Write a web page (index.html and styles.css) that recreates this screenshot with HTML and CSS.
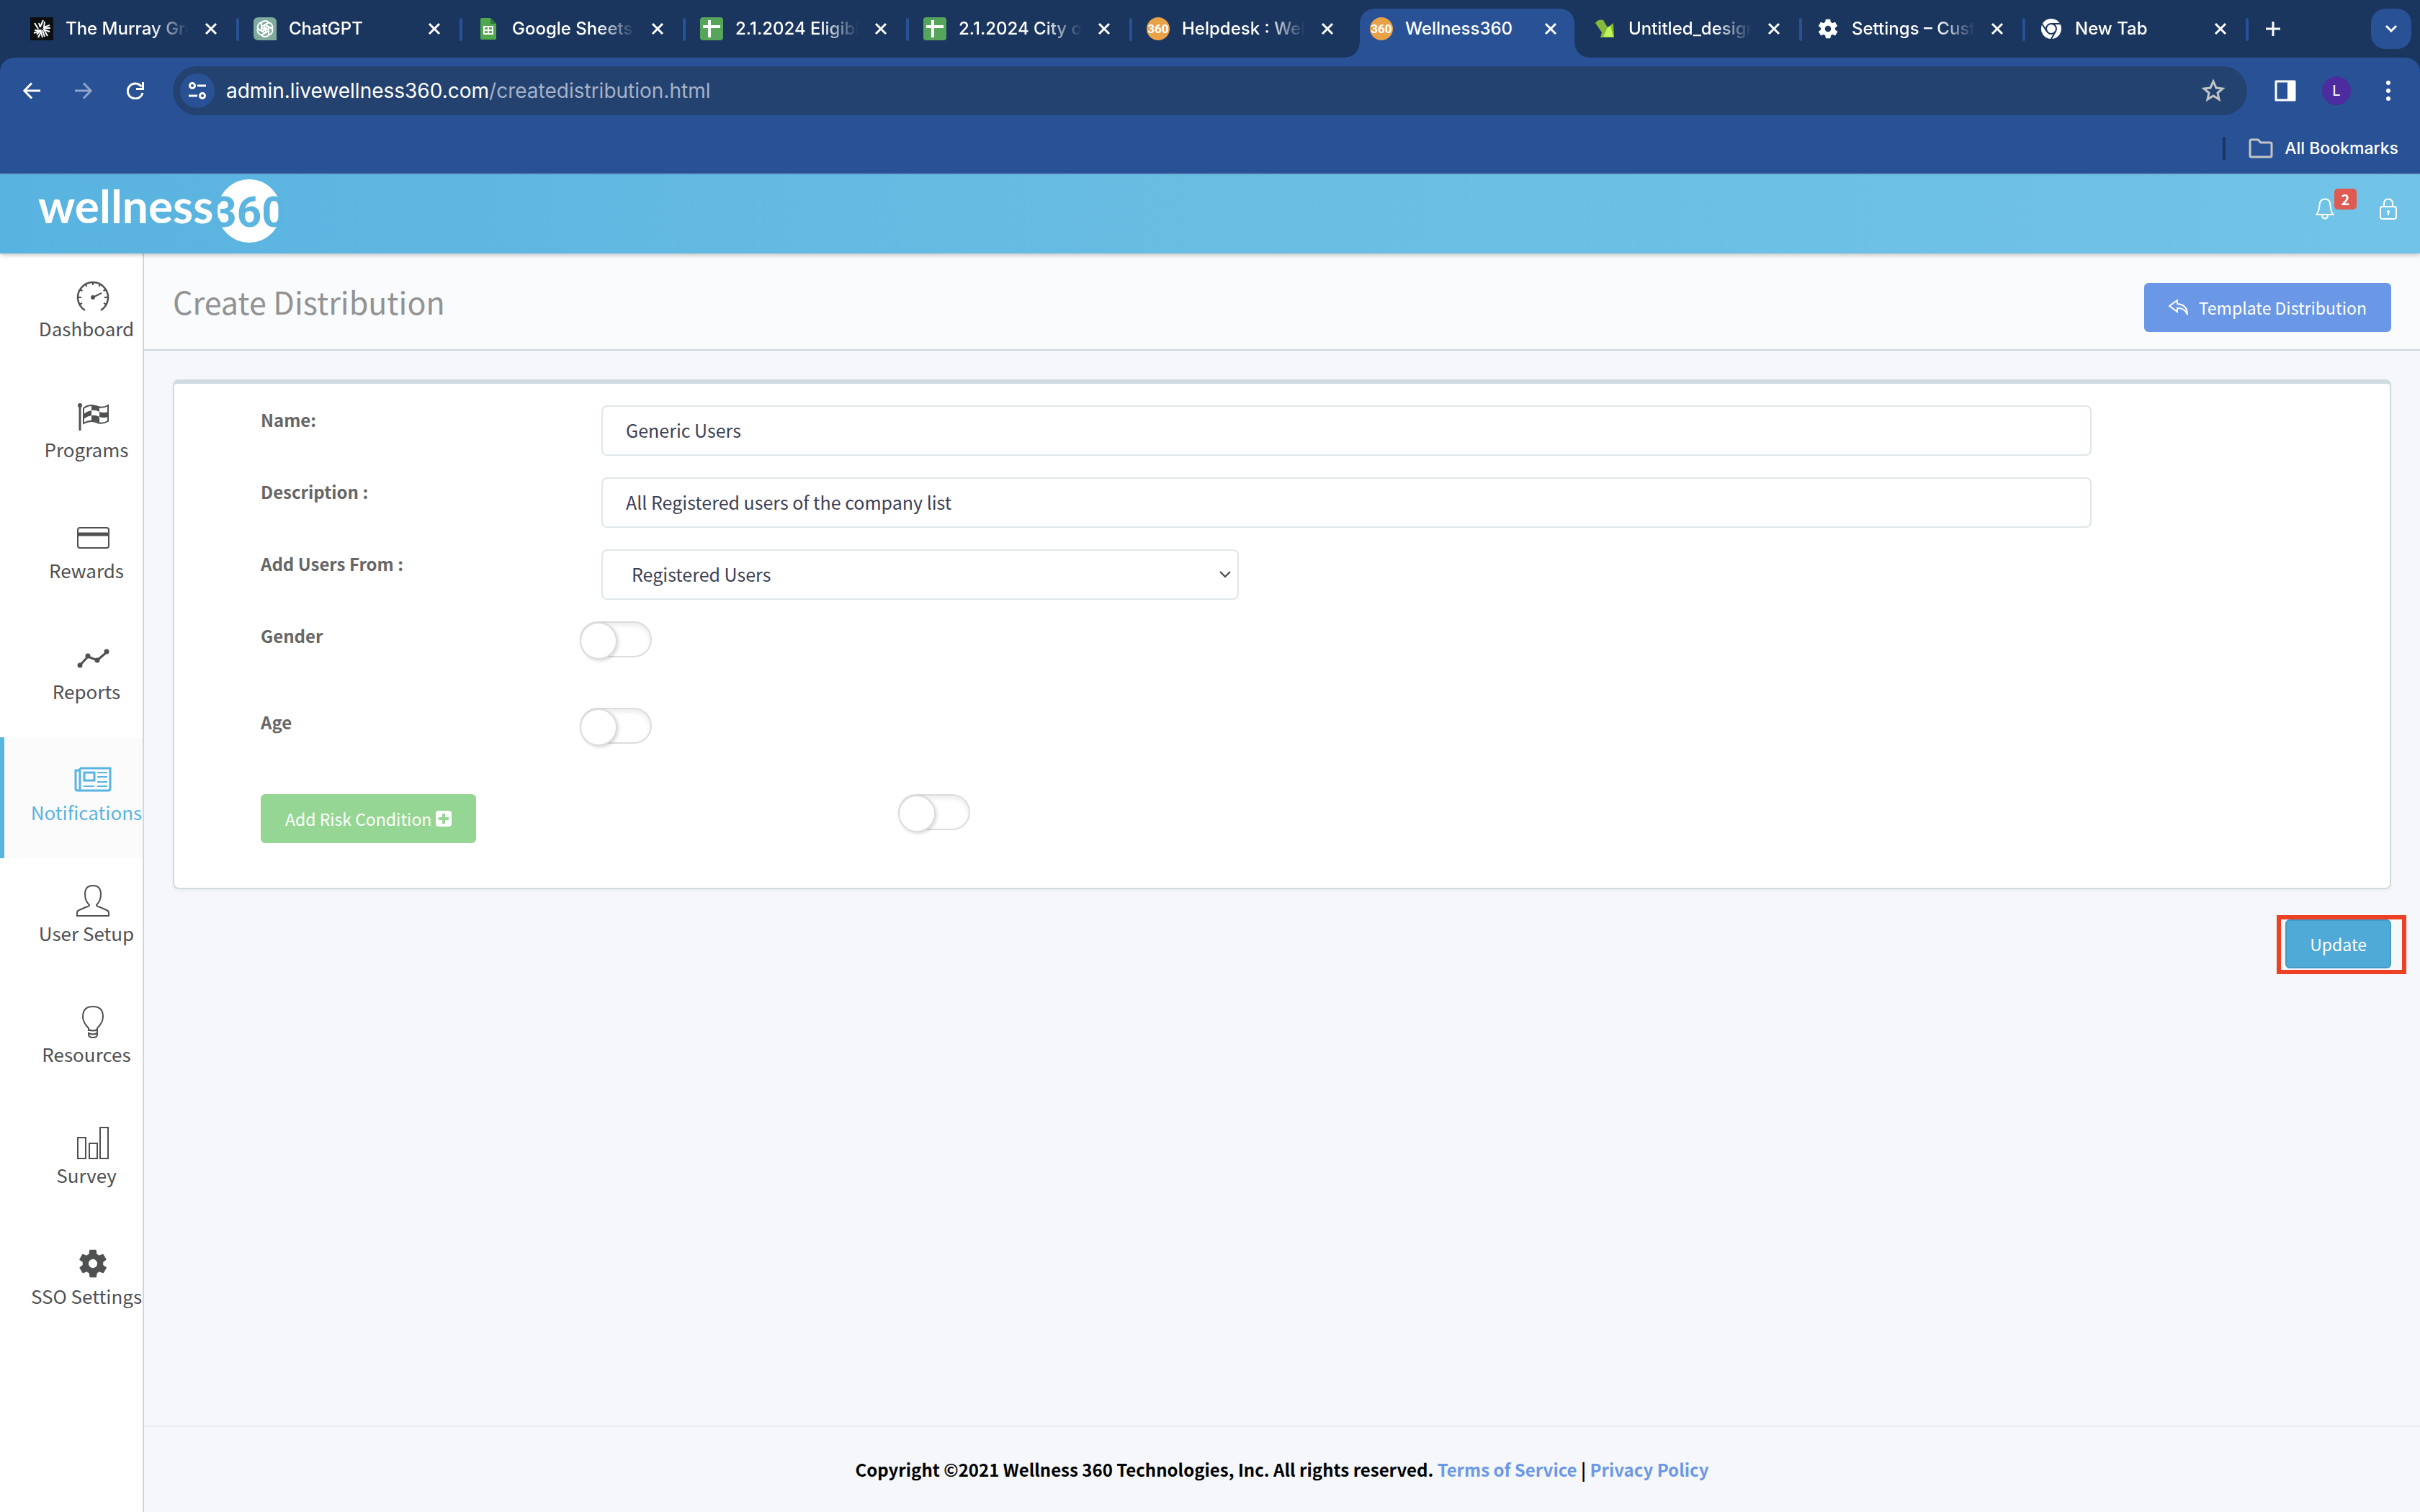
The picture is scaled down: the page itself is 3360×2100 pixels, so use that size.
FILE: index.html
```html
<!DOCTYPE html>
<html lang="en">
<head>
    <meta charset="UTF-8">
    <meta name="viewport" content="width=device-width, initial-scale=1.0">
    <title>Wellness360</title>
    <link rel="stylesheet" href="styles.css">
</head>
<body>
    <!-- shared symbols -->
    <svg width="0" height="0" class="defs">
        <symbol id="close" viewBox="0 0 18 18"><path d="M2 2l14 14M16 2L2 16" stroke="#fff" stroke-width="3" fill="none"/></symbol>
        <symbol id="sheet" viewBox="0 0 32 32"><rect width="32" height="32" rx="4" fill="#57a55a"/><path d="M13 4v24M4 13h24" stroke="#fff" stroke-width="4"/></symbol>
        <symbol id="w360" viewBox="0 0 32 32"><circle cx="16" cy="16" r="16" fill="#eaa248"/><text x="16" y="22" text-anchor="middle" font-family="Roboto, sans-serif" font-weight="bold" font-size="17" fill="#fff">360</text></symbol>
        <symbol id="gear" viewBox="0 0 24 24"><path d="M19.4 13a7.500 7.500 0 0 0 0-2l2.100-1.600a.5.5 0 0 0 .1-.7l-2-3.400a.5.5 0 0 0-.6-.2l-2.500 1a7.300 7.300 0 0 0-1.700-1L14.500 2.400a.5.5 0 0 0-.5-.4h-4a.5.5 0 0 0-.5.400L9.100 5.100a7.700 7.700 0 0 0-1.700 1l-2.500-1a.5.5 0 0 0-.6.200l-2 3.400a.5.5 0 0 0 .1.700L4.600 11a8 8 0 0 0 0 2l-2.100 1.600a.5.5 0 0 0-.1.700l2 3.400c.1.200.4.300.6.200l2.500-1c.5.400 1.100.700 1.700 1l.4 2.700c0 .200.200.4.500.4h4c.2 0 .5-.2.500-.4l.4-2.700c.6-.300 1.200-.600 1.700-1l2.500 1c.2.100.5 0 .6-.2l2-3.400a.5.5 0 0 0-.1-.7zM12 15.200a3.200 3.200 0 1 1 0-6.400 3.200 3.200 0 0 1 0 6.400z" fill="currentColor"/></symbol>
    </svg>

    <div class="browser">
    <div class="tab-strip">
        <div class="tab">
            <svg class="favicon" viewBox="0 0 32 32"><rect width="32" height="32" fill="#0b0f10"/><path d="M18 4l-4 9M12 8l2 6M6 8l5 8M27 11l-8 3 1-8M6 18h8l-5 6M5 22l7-3M28 15h-9M27 20l-8-3 5 9M20 27l-3-9M17 28l-2-8-4 8" stroke="#fff" stroke-width="2" fill="none"/></svg>
            <span class="tab-title">The Murray Group</span>
            <button class="tab-close" aria-label="Close tab"><svg><use href="#close"/></svg></button>
        </div>
        <div class="tab">
            <svg class="favicon" viewBox="0 0 32 32"><path d="M7 0h18q7 0 7 7v25H7q-7 0-7-7V7q0-7 7-7z" fill="#7faa9c"/><g fill="none" stroke="#fff" stroke-width="2"><path id="petal" d="M11 18v-8q0-5 5-5 3 0 5 2l-6 4v6"/><use href="#petal" transform="rotate(60 16 16)"/><use href="#petal" transform="rotate(120 16 16)"/><use href="#petal" transform="rotate(180 16 16)"/><use href="#petal" transform="rotate(240 16 16)"/><use href="#petal" transform="rotate(300 16 16)"/></g></svg>
            <span class="tab-title">ChatGPT</span>
            <button class="tab-close" aria-label="Close tab"><svg><use href="#close"/></svg></button>
        </div>
        <div class="tab">
            <svg class="favicon" viewBox="0 0 32 32"><path d="M7 1h12l8 8v20a2 2 0 0 1-2 2H7a2 2 0 0 1-2-2V3a2 2 0 0 1 2-2z" fill="#50a84f"/><path d="M19 1l8 8h-8z" fill="#2f7a36"/><path d="M10 13h12v10H10zM10 18h12M16 13v10" fill="none" stroke="#fff" stroke-width="2"/></svg>
            <span class="tab-title">Google Sheets: Sign</span>
            <button class="tab-close" aria-label="Close tab"><svg><use href="#close"/></svg></button>
        </div>
        <div class="tab">
            <svg class="favicon"><use href="#sheet"/></svg>
            <span class="tab-title">2.1.2024 Eligibility</span>
            <button class="tab-close" aria-label="Close tab"><svg><use href="#close"/></svg></button>
        </div>
        <div class="tab">
            <svg class="favicon"><use href="#sheet"/></svg>
            <span class="tab-title">2.1.2024 City of</span>
            <button class="tab-close" aria-label="Close tab"><svg><use href="#close"/></svg></button>
        </div>
        <div class="tab no-line">
            <svg class="favicon"><use href="#w360"/></svg>
            <span class="tab-title">Helpdesk : Wellness</span>
            <button class="tab-close" aria-label="Close tab"><svg><use href="#close"/></svg></button>
        </div>
        <div class="tab active">
            <svg class="favicon"><use href="#w360"/></svg>
            <span class="tab-title">Wellness360</span>
            <button class="tab-close" aria-label="Close tab"><svg><use href="#close"/></svg></button>
        </div>
        <div class="tab">
            <svg class="favicon" viewBox="0 0 32 32"><path d="M3 8q4-6 11-4l6 10 8-6 1 20H10l2-7z" fill="#86b839"/><path d="M20 14l4-2 4 15H14z" fill="#c0f457"/></svg>
            <span class="tab-title">Untitled_design</span>
            <button class="tab-close" aria-label="Close tab"><svg><use href="#close"/></svg></button>
        </div>
        <div class="tab">
            <svg class="favicon"><use href="#gear"/></svg>
            <span class="tab-title">Settings – Customize</span>
            <button class="tab-close" aria-label="Close tab"><svg><use href="#close"/></svg></button>
        </div>
        <div class="tab">
            <svg class="favicon" viewBox="0 0 32 32"><circle cx="16" cy="16" r="14" fill="#fff"/><g fill="none" stroke="#1a355e" stroke-width="2"><circle cx="16" cy="16" r="7"/><path d="M16 9h13M10 19.500L3 9M22 19.500L16 30"/></g></svg>
            <span class="tab-title">New Tab</span>
            <button class="tab-close" aria-label="Close tab"><svg><use href="#close"/></svg></button>
        </div>
        <button class="new-tab" aria-label="New tab"><svg width="22" height="22" viewBox="0 0 22 22"><path d="M11 1v20M1 11h20" stroke="#fff" stroke-width="3"/></svg></button>
        <button class="tab-search" aria-label="Search tabs"><svg width="18" height="12" viewBox="0 0 18 12"><path d="M2 2l7 7 7-7" fill="none" stroke="#fff" stroke-width="3"/></svg></button>
    </div>

    <div class="browser-bar">
        <div class="toolbar">
            <button class="nav-button" aria-label="Back"><svg viewBox="0 0 24 24"><path d="M24 12H2M12 1.500L1.800 12 12 22.500" fill="none" stroke="#fff" stroke-width="3"/></svg></button>
            <button class="nav-button" aria-label="Forward"><svg viewBox="0 0 24 24"><path d="M0 12h22M12 1.500L22.200 12 12 22.500" fill="none" stroke="#8fa5cb" stroke-width="3"/></svg></button>
            <button class="nav-button" aria-label="Reload"><svg viewBox="0 0 24 24"><path d="M22 15a10.500 10.500 0 1 1-1.500-8.500M22.500 0v9.500H13" fill="none" stroke="#fff" stroke-width="3"/></svg></button>
            <div class="omnibox">
                <span class="site-info"><svg width="26" height="26" viewBox="0 0 26 26" fill="none" stroke="#fff" stroke-width="3"><circle cx="6" cy="6" r="3.500"/><path d="M13 6h12M1 20h12"/><circle cx="20" cy="20" r="3.500"/></svg></span>
                <span class="url">admin.livewellness360.com<span class="path">/createdistribution.html</span></span>
                <svg class="star" width="34" height="34" viewBox="0 0 34 34"><path d="M17 4l4 9 9 1-7 6 2 9-8-5-8 5 2-9-7-6 9-1z" fill="none" stroke="#c3c4c6" stroke-width="3"/></svg>
            </div>
            <svg class="side-panel" width="30" height="30" viewBox="0 0 30 30"><path d="M2 2h26v26H2z" fill="none" stroke="#fff" stroke-width="3" stroke-linejoin="round"/><path d="M18 2h10v26H18z" fill="#fff"/></svg>
            <span class="avatar">L</span>
            <svg class="more" width="8" height="30" viewBox="0 0 8 30" fill="#fff"><circle cx="4" cy="4" r="3"/><circle cx="4" cy="15" r="3"/><circle cx="4" cy="26" r="3"/></svg>
        </div>
        <div class="bookmarks">
            <a href="#" class="all-bookmarks">
                <svg width="34" height="28" viewBox="0 0 34 28"><path d="M2 24V4q0-2 2-2h9l4 4h13q2 0 2 2v16q0 2-2 2H4q-2 0-2-2z" fill="none" stroke="#c3c4c6" stroke-width="3"/></svg>
                All Bookmarks
            </a>
        </div>
    </div>
    </div>

    <header class="header">
        <a href="#" class="logo" aria-label="wellness360">
            <svg width="340" height="96" viewBox="0 0 340 96">
                <circle cx="294" cy="49" r="44" fill="#fff"/>
                <text x="1" y="66" class="logo-word">wellness</text>
                <text x="294" y="71" class="logo-num">360</text>
            </svg>
        </a>
        <div class="header-tools">
            <a href="#" class="bell" aria-label="Notifications">
                <svg width="26" height="30" viewBox="0 0 26 30" fill="none" stroke="#fff" stroke-width="2"><path d="M13 1.500q7 0 7.500 8 .3 8 4 13.500H1.500Q5.200 17.500 5.500 9.500q.5-8 7.500-8zM9 23.500q0 5 4 5t4-5"/></svg>
                <span class="badge">2</span>
            </a>
            <a href="#" class="lock" aria-label="Lock">
                <svg width="26" height="30" viewBox="0 0 26 30" fill="none" stroke="#fff" stroke-width="2"><rect x="2" y="12" width="22" height="17" rx="3"/><path d="M7 12V8q0-6.500 6-6.500T19 8v4M13 19v5"/><circle cx="13" cy="19" r="1"/></svg>
            </a>
        </div>
    </header>

    <div class="page">
        <nav class="sidebar">
            <a href="#" class="nav-item">
                <svg viewBox="0 0 46 46" fill="none" stroke="#4f5051" stroke-width="2"><path d="M12 43A21 21 0 1 1 34 43" stroke-width="2.500"/><path d="M23 3v5M12.500 6l2 4M33.500 6l-2 4M4.500 14l4 2M41.500 14l-4 2M2 25h5M44 25h-5M4 35l4-2M42 35l-4-2M23 25l12-6"/><circle cx="23" cy="25" r="2" fill="#4f5051"/></svg>
                <span>Dashboard</span>
            </a>
            <a href="#" class="nav-item">
                <svg viewBox="0 0 46 42" fill="none" stroke="#4f5051" stroke-width="2"><path d="M5 6v34" stroke-width="3"/><circle cx="5" cy="5" r="3" fill="#4f5051" stroke="none"/><path d="M10 9q8-6 17-3 9 4 17-1v22q-9 5-17 1-8-3-17 2z"/><path d="M21 5q6-1 11 3v6q-5-3-11-2zM10 17q5-4 11-5v7q-6 1-11 5zM32 14q6 2 12 0v7q-6 2-12 0zM21 19q6-1 11 2v8q-5-3-11-3z" fill="#4f5051" stroke="none"/></svg>
                <span>Programs</span>
            </a>
            <a href="#" class="nav-item">
                <svg viewBox="0 0 46 42" fill="none" stroke="#4f5051" stroke-width="2"><rect x="2" y="7" width="43" height="28" rx="3"/><path d="M2 16h43" stroke-width="5"/></svg>
                <span>Rewards</span>
            </a>
            <a href="#" class="nav-item">
                <svg viewBox="0 0 46 42" fill="#4f5051"><path d="M5 30l11-12 13 5 13-11" fill="none" stroke="#4f5051" stroke-width="3"/><circle cx="5" cy="30" r="3.500"/><circle cx="16" cy="17" r="3.500"/><circle cx="29" cy="23" r="3.500"/><circle cx="42" cy="11" r="3.500"/></svg>
                <span>Reports</span>
            </a>
            <a href="#" class="nav-item current">
                <svg viewBox="0 0 52 42" fill="none" stroke="#58b4e1" stroke-width="3"><path d="M8 5h42v28q0 3-3 3H5q-3 0-3-3V8h5M8 5v28q0 3-3 3"/><rect x="14" y="11" width="14" height="11"/><path d="M32 11h14M32 17h14M32 24h14M13 30h15M32 30h14" stroke-width="2"/></svg>
                <span>Notifications</span>
            </a>
            <a href="#" class="nav-item">
                <svg viewBox="0 0 46 46" fill="none" stroke="#4f5051" stroke-width="2"><path d="M18 29Q12 23 12 14 12 2 23 2t11 12q0 9-6 15 0 2 5 3l9 4q3 1 3 4v4H1v-4q0-3 3-4l9-4q5-1 5-3z"/></svg>
                <span>User Setup</span>
            </a>
            <a href="#" class="nav-item">
                <svg viewBox="0 0 46 46" fill="none" stroke="#4f5051" stroke-width="2"><path d="M17 36v-4Q9 24 9 16 9 2 23 2t14 14q0 8-8 16v4M17 34q6 3 12 0v7q0 4-6 4t-6-4v-2q6 3 12 0"/></svg>
                <span>Resources</span>
            </a>
            <a href="#" class="nav-item">
                <svg viewBox="0 0 46 46" fill="none" stroke="#4f5051" stroke-width="2"><rect x="2" y="16" width="11" height="29"/><rect x="18" y="24" width="11" height="21"/><rect x="33" y="2" width="11" height="43"/></svg>
                <span>Survey</span>
            </a>
            <a href="#" class="nav-item">
                <svg><use href="#gear"/></svg>
                <span>SSO Settings</span>
            </a>
        </nav>

        <div class="content">
            <div class="page-head">
                <h1>Create Distribution</h1>
                <button class="btn btn-template">
                    <svg width="28" height="22" viewBox="0 0 28 22" fill="none" stroke="#fff" stroke-width="2"><path d="M12 1L1 9l11 8v-5q10-1 14 9 0-14-14-15z"/></svg>
                    Template Distribution
                </button>
            </div>

            <form class="panel">
                <div class="form-row">
                    <label for="name">Name:</label>
                    <input type="text" id="name" value="Generic Users">
                </div>
                <div class="form-row">
                    <label for="description">Description :</label>
                    <input type="text" id="description" value="All Registered users of the company list">
                </div>
                <div class="form-row">
                    <label for="users-from">Add Users From :</label>
                    <select id="users-from">
                        <option>Registered Users</option>
                    </select>
                </div>
                <div class="form-row toggle-row">
                    <label for="gender">Gender</label>
                    <input type="checkbox" class="switch" id="gender">
                </div>
                <div class="form-row toggle-row">
                    <label for="age">Age</label>
                    <input type="checkbox" class="switch" id="age">
                </div>
                <div class="form-row risk-row">
                    <button type="button" class="btn btn-risk">Add Risk Condition
                        <svg width="22" height="24" viewBox="0 0 22 24"><rect y="1" width="22" height="22" rx="4" fill="#fff"/><path d="M11 5v14M4 12h14" stroke="#96d694" stroke-width="4"/></svg>
                    </button>
                    <input type="checkbox" class="switch" aria-label="Risk condition">
                </div>
            </form>

            <div class="actions">
                <div class="highlight">
                    <button class="btn btn-update">Update</button>
                </div>
            </div>

            <footer class="footer">
                <p>Copyright ©2021 Wellness 360 Technologies, Inc. All rights reserved. <a href="#">Terms of Service</a> | <a href="#">Privacy Policy</a></p>
            </footer>
        </div>
    </div>
</body>
</html>
```
FILE: styles.css
```css
* {
    box-sizing: border-box;
}
body {
    margin: 0;
    min-height: 100vh;
    display: flex;
    flex-direction: column;
    font-family: 'Noto Sans CJK SC', 'Noto Sans', sans-serif;
    font-size: 25px;
    line-height: 36px;
    color: #4f5051;
    background-color: #f5f7fb;
}
button, input, select {
    font: inherit;
    margin: 0;
}
button {
    border: none;
    padding: 0;
    background: none;
    cursor: pointer;
}
a {
    text-decoration: none;
}
svg {
    display: block;
    flex: none;
}
.defs {
    position: absolute;
}

/* browser tabs */
.browser {
    background-color: #1a355e;
    font-family: Inter, sans-serif;
    color: #fff;
}
.tab-strip {
    display: flex;
    align-items: flex-start;
    height: 80px;
    padding: 12px 12px 0 20px;
    font-weight: 500;
    font-size: 24px;
}
.tab {
    position: relative;
    display: flex;
    align-items: center;
    flex: 0 1 310px;
    min-width: 0;
    height: 56px;
    padding: 0 28px 0 22px;
}
.tab::after {
    content: "";
    position: absolute;
    right: -2px;
    top: 13px;
    width: 4px;
    height: 32px;
    border-radius: 2px;
    background-color: #285196;
}
.tab.no-line::after {
    display: none;
}
.tab.active {
    height: 68px;
    padding-bottom: 12px;
}
.tab.active > * {
    position: relative;
}
.tab.active::before {
    content: "";
    position: absolute;
    left: 8px;
    right: 4px;
    top: 0;
    bottom: 0;
    border-radius: 20px 20px 0 0;
    background-color: #285196;
}
/* curved feet of the active tab */
.tab.active::after {
    left: -12px;
    right: -16px;
    top: auto;
    bottom: 0;
    width: auto;
    height: 20px;
    border-radius: 0;
    background: radial-gradient(circle at 0 0, transparent 19px, #285196 20px) left / 20px 20px no-repeat,
                radial-gradient(circle at 100% 0, transparent 19px, #285196 20px) right / 20px 20px no-repeat;
}
.favicon {
    width: 32px;
    height: 32px;
}
.tab-title {
    flex: 1;
    min-width: 0;
    margin: 0 22px 0 17px;
    overflow: hidden;
    white-space: nowrap;
    mask-image: linear-gradient(to right, #000 70%, transparent);
}
.tab.active .tab-title {
    mask-image: none;
}
.tab-close svg {
    width: 18px;
    height: 18px;
}
.new-tab {
    margin: 17px 0 0 25px;
}
.tab-search {
    display: flex;
    align-items: center;
    justify-content: center;
    width: 56px;
    height: 56px;
    margin-left: auto;
    border-radius: 20px;
    background-color: #285196;
}

/* address bar */
.browser-bar {
    height: 162px;
    border-bottom: 2px solid #4f78b0;
    border-radius: 20px 20px 0 0;
    background-color: #285196;
}
.toolbar {
    display: flex;
    align-items: center;
    height: 92px;
    padding: 0 40px 0 32px;
}
.nav-button {
    margin-right: 48px;
}
.nav-button svg {
    width: 24px;
    height: 24px;
}
.omnibox {
    display: flex;
    align-items: center;
    flex: 1;
    height: 68px;
    margin-left: -8px;
    padding: 0 30px 0 10px;
    border-radius: 34px;
    background-color: #24426f;
}
.site-info {
    display: flex;
    align-items: center;
    justify-content: center;
    width: 48px;
    height: 48px;
    border-radius: 50%;
    background-color: #285196;
}
.url {
    flex: 1;
    margin-left: 16px;
    font-size: 28px;
}
.path {
    color: #a5b2c9;
}
.side-panel {
    margin-left: 38px;
}
.avatar {
    width: 40px;
    height: 40px;
    margin: 0 48px 0 36px;
    border-radius: 50%;
    background-color: #4c2c9f;
    font-size: 20px;
    line-height: 40px;
    text-align: center;
}
.bookmarks {
    display: flex;
    justify-content: flex-end;
    align-items: center;
    height: 68px;
    padding-right: 30px;
}
.all-bookmarks {
    display: flex;
    align-items: center;
    gap: 16px;
    height: 32px;
    padding-left: 32px;
    border-left: 4px solid #1a355e;
    font-size: 23px;
    font-weight: 500;
    color: #fff;
}

/* site header */
.header {
    position: relative;
    display: flex;
    justify-content: space-between;
    height: 110px;
    padding: 2px 31px 0 52px;
    background: linear-gradient(to right, #59b3e0, #69bde3 50%, #71c3e7);
    box-shadow: 0 2px 6px rgba(0, 0, 0, 0.25);
}
.logo-word {
    font: bold 64px Lato, sans-serif;
    fill: #fff;
}
.logo-num {
    font: bold 60px 'Liberation Sans Narrow', Roboto, sans-serif;
    fill: #5cb5e1;
    text-anchor: middle;
}
.header-tools {
    display: flex;
    gap: 62px;
    padding-top: 31px;
}
.bell {
    position: relative;
}
.badge {
    position: absolute;
    left: 26px;
    top: -13px;
    width: 31px;
    height: 29px;
    border-radius: 5px;
    background-color: #df5b52;
    font-size: 20px;
    font-weight: bold;
    line-height: 29px;
    text-align: center;
    color: #fff;
}

/* layout */
.page {
    display: flex;
    flex: 1;
}
.sidebar {
    flex: none;
    width: 200px;
    border-right: 2px solid #d5d5d5;
    background-color: #fff;
}
.nav-item {
    display: flex;
    flex-direction: column;
    align-items: center;
    height: 168px;
    padding: 36px 0 0 36px;
    border-left: 6px solid transparent;
    font-size: 26px;
    white-space: nowrap;
    color: #4f5051;
}
.nav-item svg {
    width: 46px;
    height: 46px;
    margin-left: 18px;
}
.nav-item span {
    margin-top: 4px;
}
.nav-item.current {
    border-color: #58b4e1;
    background-color: #fbfbfc;
    color: #58b4e1;
}
.nav-item.current svg {
    width: 52px;
}
.content {
    display: flex;
    flex-direction: column;
    flex: 1;
    min-width: 0;
}
.page-head {
    display: flex;
    justify-content: space-between;
    height: 135px;
    padding: 36px 40px 24px;
    border-bottom: 2px solid #d0dae1;
    background-color: #fafbfd;
}
h1 {
    margin: 0;
    font-size: 43px;
    font-weight: normal;
    line-height: 60px;
    color: #929292;
}
.btn {
    display: flex;
    align-items: center;
    justify-content: center;
    height: 68px;
    padding: 0 34px;
    border-radius: 6px;
    font-size: 23px;
    color: #fff;
}
.btn-template {
    align-self: flex-end;
    gap: 14px;
    background-color: #6b98e6;
}

/* form */
.panel {
    margin: 40px 40px 0;
    padding: 30px 0 62px 120px;
    border: 2px solid #d0dae1;
    border-top-width: 6px;
    border-radius: 8px;
    background-color: #fff;
    box-shadow: 0 2px 4px rgba(0, 0, 0, 0.05);
}
.form-row {
    display: grid;
    grid-template-columns: 473px 5fr 1fr;
    align-items: start;
    margin-bottom: 30px;
}
.form-row label {
    padding-top: 2px;
    font-size: 24px;
    font-weight: bold;
    color: #666;
}
input[type="text"], select {
    width: 100%;
    height: 70px;
    padding: 0 32px 2px;
    border: 2px solid #dfe6ea;
    border-radius: 8px;
    background-color: #fff;
    color: #3c3f54;
}
select {
    width: 885px;
    max-width: 100%;
    padding: 0 40px 2px;
    appearance: none;
    background: #fff url("data:image/svg+xml,%3Csvg xmlns='http://www.w3.org/2000/svg' width='18' height='12'%3E%3Cpath d='M2 2l7 7 7-7' fill='none' stroke='%23444' stroke-width='2'/%3E%3C/svg%3E") no-repeat right 8px center;
}
.toggle-row {
    height: 90px;
    grid-template-columns: 443px 1fr;
}
.switch {
    appearance: none;
    width: 100px;
    height: 50px;
    border: 2px solid #dcdcdc;
    border-radius: 25px;
    background-color: #fff;
    box-shadow: inset 0 4px 6px rgba(0, 0, 0, 0.08);
}
.switch::before {
    content: "";
    display: block;
    width: 48px;
    height: 48px;
    margin: -1px -2px;
    border: 2px solid #dcdcdc;
    border-radius: 50%;
    background-color: #fff;
    box-shadow: 2px 2px 4px rgba(0, 0, 0, 0.15);
}
.risk-row {
    grid-template-columns: 885px 1fr;
    margin-bottom: 0;
}
.btn-risk {
    justify-self: start;
    gap: 6px;
    background-color: #96d694;
}
.actions {
    display: flex;
    justify-content: flex-end;
    padding: 36px 19px 0 0;
}
.highlight {
    padding: 0 15px 2px 6px;
    border: 6px solid #ec4125;
}
.btn-update {
    padding: 0 32px;
    border: 2px solid #4699c6;
    background-color: #50aad8;
}
.footer {
    margin-top: auto;
    padding: 41px 0;
    border-top: 2px solid #e6ebee;
    font-size: 24px;
    font-weight: bold;
    text-align: center;
    color: #000;
}
.footer p {
    margin: 0;
}
.footer a {
    color: #6b98e6;
}
```
